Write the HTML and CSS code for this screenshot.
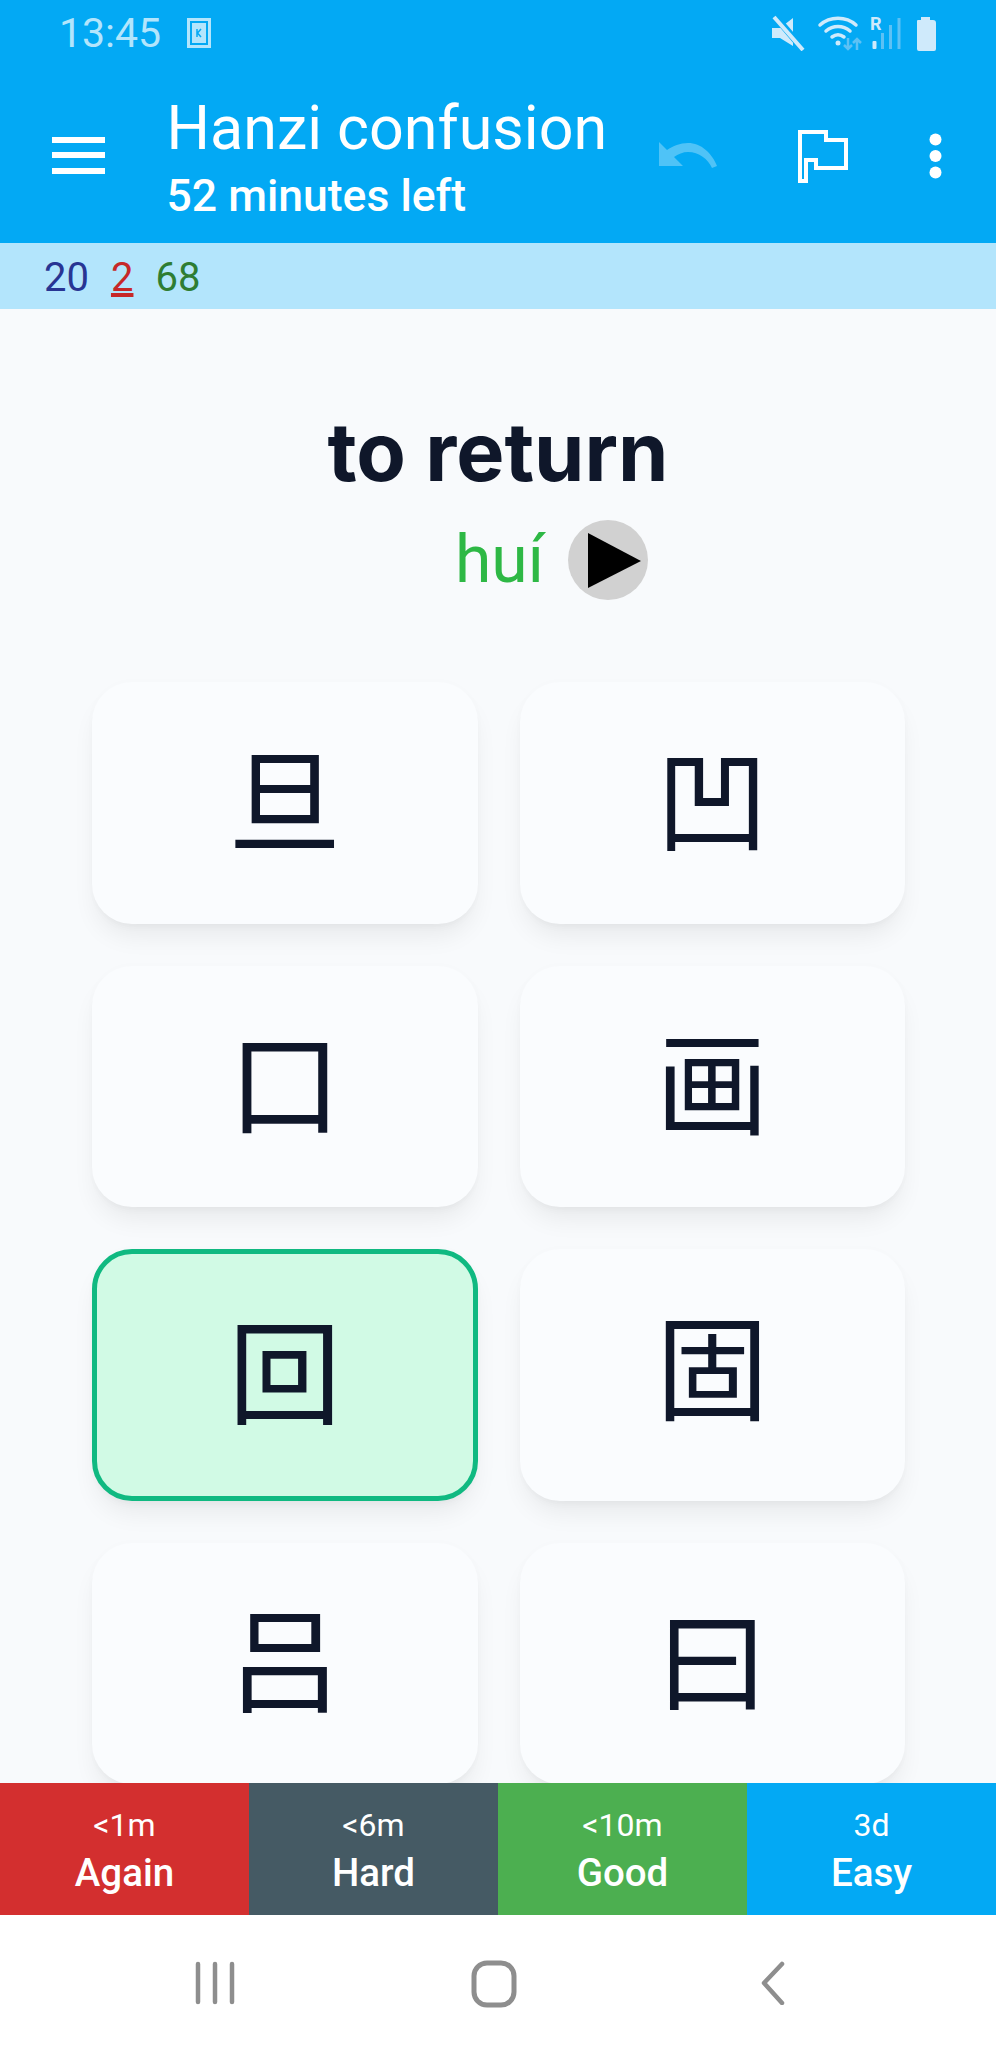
FILE: index.html
```html
<!DOCTYPE html>
<html lang="en">
<head>
<meta charset="utf-8">
<title>Hanzi confusion</title>
<link rel="stylesheet" href="styles.css">
</head>
<body>
<div class="app">
  <header class="header">
    <div class="status">
      <div class="status-left">
        <span class="time">13:45</span>
        <svg class="kbadge" viewBox="0 0 24 30"><path fill="#b3e5fc" fill-rule="evenodd" d="M0 0h24v30H0zM3 3v24h18V3z"/><rect x="5" y="5" width="14" height="20" fill="#b3e5fc"/><path d="M10 11v8M14 11l-3.500 4 3.500 4" stroke="#03a9f4" stroke-width="1.500" fill="none"/></svg>
      </div>
      <svg class="status-icons" viewBox="0 -6 170 42">
        <path fill="#cfeafb" d="M1 13h8l13-10v28L9 23H1z"/>
        <path stroke="#03a9f4" stroke-width="7" d="M3 0l29 34"/>
        <path stroke="#cfeafb" stroke-width="4" d="M3 2l29 33"/>
        <g fill="none" stroke="#cfeafb" stroke-width="3.500" stroke-linecap="round">
          <path d="M49 10c10-9 26-9 36 0"/>
          <path d="M55 16c7-6 17-6 24 0"/>
          <path d="M61 22c4-3 8-3 12 0"/>
        </g>
        <circle cx="67" cy="28" r="2.500" fill="#cfeafb"/>
        <path stroke="#5dc1f4" stroke-width="2.500" fill="none" d="M77 23v11M73 30l4 4 4-4M86 35V24M82 28l4-4 4 4"/>
        <text class="roam" x="99" y="15">R</text>
        <rect x="101.500" y="26" width="4" height="8" rx="1" fill="#cfeafb"/>
        <rect x="110" y="18" width="3" height="16" fill="#5dc1f4"/>
        <rect x="118" y="10" width="3" height="24" fill="#5dc1f4"/>
        <rect x="126.500" y="3" width="3" height="31" fill="#5dc1f4"/>
        <path fill="#cfeafb" d="M146 6q0-1 1-1h3V2h9v3h3q3 0 3 3v26q0 2-2 2h-15q-2 0-2-2z"/>
      </svg>
    </div>
    <div class="toolbar">
      <svg class="menu" viewBox="0 0 53 37"><path fill="#fff" d="M0 0h53v6H0zM0 15h53v6H0zM0 31h53v6H0z"/></svg>
      <div class="titles">
        <div class="title">Hanzi confusion</div>
        <div class="subtitle">52 minutes left</div>
      </div>
      <svg class="undo" viewBox="0 0 58 26"><path fill="#4fc3f7" d="M0 0v24h24l-9-9c4-3 9-5 14-5 11 0 20 7 24 16l5-2C53 11 42 1 29 1 21 1 14 4 8 8z"/></svg>
      <svg class="flag" viewBox="0 0 50 53"><path fill="none" stroke="#fff" stroke-width="4" d="M2 51V2h26v8h20v28H18v-8H8v21z"/></svg>
      <svg class="dots" viewBox="0 0 13 46"><circle cx="6.500" cy="6.500" r="6" fill="#fff"/><circle cx="6.500" cy="23" r="6" fill="#fff"/><circle cx="6.500" cy="39.500" r="6" fill="#fff"/></svg>
    </div>
  </header>
  <div class="counts">
    <span class="count-new">20</span>
    <span class="count-learn">2</span>
    <span class="count-review">68</span>
  </div>
  <main class="content">
    <h1 class="prompt">to return</h1>
    <div class="reading">
      <span class="pinyin">huí</span>
      <span class="play"><svg class="play-icon" viewBox="0 0 53 55"><path d="M0 0l53 28L0 55z"/></svg></span>
    </div>
    <div class="grid">
      <div class="card">旦</div>
      <div class="card">凹</div>
      <div class="card">口</div>
      <div class="card">画</div>
      <div class="card card-correct">回</div>
      <div class="card card-raised">固</div>
      <div class="card">吕</div>
      <div class="card">曰</div>
    </div>
  </main>
  <div class="answers">
    <div class="answer again"><span class="interval">&lt;1m</span><span class="ease">Again</span></div>
    <div class="answer hard"><span class="interval">&lt;6m</span><span class="ease">Hard</span></div>
    <div class="answer good"><span class="interval">&lt;10m</span><span class="ease">Good</span></div>
    <div class="answer easy"><span class="interval">3d</span><span class="ease">Easy</span></div>
  </div>
  <nav class="navbar">
    <svg class="nav-icon nav-recent" viewBox="0 0 40 44"><path stroke="#8e8e8e" stroke-width="4.500" stroke-linecap="round" d="M3 3v38M20 3v38M37 3v38"/></svg>
    <svg class="nav-icon nav-home" viewBox="0 0 46 48"><rect x="3" y="3" width="40" height="42" rx="13" fill="none" stroke="#8e8e8e" stroke-width="5"/></svg>
    <svg class="nav-icon nav-back" viewBox="0 0 26 44"><path fill="none" stroke="#8e8e8e" stroke-width="4.500" stroke-linecap="round" stroke-linejoin="round" d="M23 3L5 22l18 20"/></svg>
  </nav>
</div>
</body>
</html>
```
FILE: styles.css
```css
* { box-sizing: border-box; }
html, body { margin: 0; padding: 0; }
body { font-family: Roboto, "Noto Sans", sans-serif; background: #fff; }
.app { width: 996px; height: 2048px; display: flex; flex-direction: column; overflow: hidden; }

.header { background: #03a9f4; height: 243px; flex: none; display: flex; flex-direction: column; }
.status { height: 62px; padding: 9px 58px 0 59px; display: flex; justify-content: space-between; align-items: flex-start; }
.status-left { display: flex; align-items: center; gap: 26px; margin-top: 3px; }
.time { color: #b3e5fc; font-size: 41px; line-height: 42px; }
.kbadge { width: 24px; height: 30px; display: block; }
.status-icons { width: 170px; height: 42px; display: block; margin-right: -3px; }
.roam { font: 700 18px Roboto, sans-serif; fill: #cfeafb; }

.toolbar { flex: 1; display: flex; align-items: flex-start; padding-left: 52px; }
.menu { width: 53px; height: 37px; margin-top: 75px; flex: none; }
.titles { margin-left: 61.500px; width: 492.500px; flex: none; padding-top: 32px; color: #fff; }
.title { font-size: 61px; line-height: 68px; white-space: nowrap; }
.subtitle { font-size: 44.500px; line-height: 46px; font-weight: 500; margin-top: 11px; white-space: nowrap; }
.undo { width: 58px; height: 26px; margin-top: 80px; flex: none; }
.flag { width: 50px; height: 53px; margin-top: 68px; margin-left: 81px; flex: none; }
.dots { width: 13px; height: 46px; margin-top: 71px; margin-left: 81px; flex: none; }

.counts { height: 66px; flex: none; background: #b3e5fc; padding: 2px 0 0 44px; display: flex; gap: 22px; align-items: center; font-size: 40px; }
.count-new { color: #283593; }
.count-learn { color: #c62828; text-decoration: underline; }
.count-review { color: #2e7d32; }

.content { flex: 1; min-height: 0; overflow: hidden; background: #f8fafc; display: flex; flex-direction: column; }
.prompt { margin: 99px 0 0; text-align: center; font: 700 81px/88px Inter, sans-serif; color: #0f172a; }
.reading { display: flex; align-items: center; justify-content: center; gap: 24px; margin-top: 24px; padding-left: 107px; }
.pinyin { color: #2eb845; font: 400 66px/80px Roboto, sans-serif; }
.play { width: 80px; height: 80px; border-radius: 50%; background: #d1d1d1; display: flex; align-items: center; justify-content: center; padding-left: 12px; }
.play-icon { width: 53px; height: 55px; display: block; }

.grid { margin-top: 82px; padding: 0 91px 0 92px; display: grid; grid-template-columns: 1fr 1fr; column-gap: 42px; row-gap: 42px; }
.card { min-height: 241.500px; padding-bottom: 17px; border-radius: 40px; background: #fafcfe; box-shadow: 0 16px 26px -5px rgba(0,0,0,.07), 0 6px 10px -4px rgba(0,0,0,.03), 0 0 10px rgba(0,0,0,.015); display: flex; align-items: center; justify-content: center; color: #0f172a; font: 400 113px/1 "Noto Sans CJK SC", sans-serif; }
.card-correct { min-height: 251.500px; background: #d1fae5; border: 5px solid #10b981; }
.card-raised { padding-bottom: 24px; }

.answers { height: 132px; flex: none; display: grid; grid-template-columns: repeat(4, 1fr); }
.answer { display: flex; flex-direction: column; align-items: center; color: #fff; padding-top: 24px; }
.interval { font-size: 32px; line-height: 36px; }
.ease { font-size: 38.500px; line-height: 50px; font-weight: 500; margin-top: 5px; }
.again { background: #d32f2f; }
.hard { background: #455a64; }
.good { background: #4caf50; }
.easy { background: #03a9f4; }

.navbar { height: 133px; flex: none; background: #fff; position: relative; }
.nav-icon { position: absolute; top: 46px; display: block; }
.nav-recent { left: 195px; width: 40px; height: 44px; }
.nav-home { left: 471px; width: 46px; height: 48px; top: 45px; }
.nav-back { left: 759px; width: 26px; height: 44px; }
```
